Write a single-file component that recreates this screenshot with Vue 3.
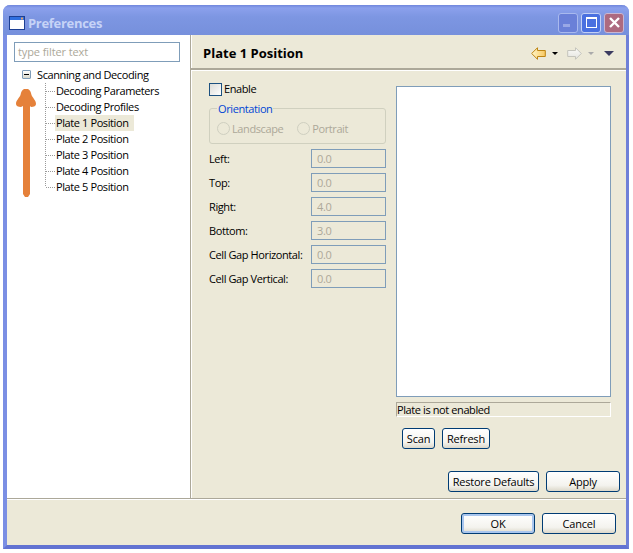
<template>
  <div class="window">
    <div class="titlebar">
      <svg class="app-icon" width="16" height="14" viewBox="0 0 16 14">
        <rect x="0.5" y="0.5" width="15" height="13" fill="#fff" stroke="#1c3f94" />
        <rect x="1" y="1" width="14" height="3" fill="#2f6fe0" />
        <rect x="12" y="1.5" width="2" height="2" fill="#e8a060" />
      </svg>
      <span class="title">Preferences</span>
      <div class="caption-buttons">
        <button class="cap cap-min"><span class="min-bar"></span></button>
        <button class="cap cap-max"><span class="max-box"></span></button>
        <button class="cap cap-close">
          <svg width="13" height="13" viewBox="0 0 13 13">
            <path d="M2 2 L11 11 M11 2 L2 11" stroke="#fff" stroke-width="2.4" />
          </svg>
        </button>
      </div>
    </div>

    <div class="body">
      <aside class="sidebar">
        <div class="filter">type filter text</div>
        <div class="tree">
          <div class="tree-root">
            <span class="expander"></span>
            <span>Scanning and Decoding</span>
          </div>
          <div class="tree-children">
            <div v-for="item in treeItems" :key="item" class="tree-row">
              <span class="dots"></span>
              <span class="tree-label" :class="{ selected: item === 'Plate 1 Position' }">{{ item }}</span>
            </div>
          </div>
        </div>
        <svg class="arrow" width="20" height="109" viewBox="0 0 20 109">
          <path d="M8 0 L12 0 C14 1 15 3 15.5 6 C16.5 9 20 11 20 15 C20 17 18 18 15 18 L14 17 L14 105 L12 108 L9 108 L7 105 L7 17 L5 18 C2 18 0 17 0 15 C0 11 3.5 9 4.5 6 C5 3 6 1 8 0 Z" fill="#e5813a" />
        </svg>
      </aside>

      <main class="page">
        <header class="page-header">
          <h1>Plate 1 Position</h1>
          <div class="nav-tools">
            <svg width="15" height="13" viewBox="0 0 15 13">
              <defs>
                <linearGradient id="backFill" x1="0" y1="0" x2="1" y2="0">
                  <stop offset="0" stop-color="#fff6c8" />
                  <stop offset="1" stop-color="#f8c860" />
                </linearGradient>
              </defs>
              <path d="M0.7 6.5 L6.5 0.7 L6.5 3.5 L14.3 3.5 L14.3 9.5 L6.5 9.5 L6.5 12.3 Z" fill="url(#backFill)" stroke="#bd8412" />
            </svg>
            <span class="tri black"></span>
            <svg width="15" height="13" viewBox="0 0 15 13">
              <defs>
                <linearGradient id="fwdFill" x1="0" y1="0" x2="0" y2="1">
                  <stop offset="0" stop-color="#fbfbf9" />
                  <stop offset="1" stop-color="#e4e4de" />
                </linearGradient>
              </defs>
              <path d="M14.3 6.5 L8.5 0.7 L8.5 3.5 L0.7 3.5 L0.7 9.5 L8.5 9.5 L8.5 12.3 Z" fill="url(#fwdFill)" stroke="#c4c4bc" />
            </svg>
            <span class="tri grey"></span>
            <span class="tri menu"></span>
          </div>
        </header>

        <div class="page-content">
          <div class="columns">
            <section class="form">
              <label class="check-row"><span class="check"></span>Enable</label>
              <fieldset class="orientation">
                <legend>Orientation</legend>
                <span class="radio-item"><span class="radio"></span>Landscape</span>
                <span class="radio-item"><span class="radio"></span>Portrait</span>
              </fieldset>
              <div class="fields">
                <template v-for="f in fields" :key="f.label">
                  <span class="field-label">{{ f.label }}</span>
                  <span class="field-input">{{ f.value }}</span>
                </template>
              </div>
            </section>

            <section class="preview-col">
              <div class="preview"></div>
              <div class="status">Plate is not enabled</div>
              <div class="scan-buttons">
                <button class="btn scan">Scan</button>
                <button class="btn refresh">Refresh</button>
              </div>
            </section>
          </div>

          <div class="page-actions">
            <button class="btn restore">Restore Defaults</button>
            <button class="btn apply">Apply</button>
          </div>
        </div>
      </main>
    </div>

    <footer class="footer">
      <button class="btn wide ok">OK</button>
      <button class="btn wide">Cancel</button>
    </footer>
  </div>
</template>

<script setup>
const treeItems = [
  'Decoding Parameters',
  'Decoding Profiles',
  'Plate 1 Position',
  'Plate 2 Position',
  'Plate 3 Position',
  'Plate 4 Position',
  'Plate 5 Position',
]

const fields = [
  { label: 'Left:', value: '0.0' },
  { label: 'Top:', value: '0.0' },
  { label: 'Right:', value: '4.0' },
  { label: 'Bottom:', value: '3.0' },
  { label: 'Cell Gap Horizontal:', value: '0.0' },
  { label: 'Cell Gap Vertical:', value: '0.0' },
]
</script>

<style>
html, body {
  margin: 0;
  background: #fff;
}
</style>

<style scoped>
.window {
  box-sizing: border-box;
  width: 626px;
  height: 544px;
  margin: 5px 0 0 3px;
  display: flex;
  flex-direction: column;
  border: 4px solid #7b8fe4;
  border-top: 0;
  border-right-width: 3px;
  border-right-color: #6f80d8;
  border-bottom-color: #6273d2;
  border-radius: 7px 7px 0 0;
  background: #ece9d8;
  font-family: "Open Sans", "Liberation Sans", sans-serif;
  font-size: 11px;
  letter-spacing: -0.4px;
  color: #000;
}

.titlebar {
  box-sizing: border-box;
  height: 30px;
  flex: none;
  margin: 0 -3px 0 -4px;
  padding: 5px 5px 0 6px;
  display: flex;
  align-items: center;
  background: linear-gradient(#6f86dc, #8ba0ec 3px, #7d96e2 12px, #7690dc);
  border-radius: 7px 7px 0 0;
}

.app-icon {
  flex: none;
}

.title {
  margin-left: 3px;
  font-size: 13px;
  font-weight: bold;
  letter-spacing: -0.3px;
  color: #c6d3f7;
}

.caption-buttons {
  margin-left: auto;
  display: flex;
  gap: 3px;
}

.cap {
  box-sizing: border-box;
  width: 20px;
  height: 20px;
  padding: 0;
  display: flex;
  align-items: center;
  justify-content: center;
  border: 1px solid #a9b9ee;
  border-radius: 3px;
}

.cap-min {
  background: #6a80d8;
  justify-content: flex-start;
}

.min-bar {
  width: 7px;
  height: 3px;
  margin: 6px 0 0 4px;
  background: #99a8e6;
}

.cap-max {
  background: #4a70e0;
  border-color: #c3d0f5;
}

.max-box {
  box-sizing: border-box;
  width: 11px;
  height: 11px;
  border: 1px solid #fff;
  border-top-width: 2px;
}

.cap-close {
  background: #ad6a80;
  border-color: #c9b6d2;
}

.body {
  flex: 1;
  min-height: 0;
  display: flex;
  border-bottom: 1px solid #aca899;
}

.sidebar {
  position: relative;
  box-sizing: border-box;
  width: 183px;
  flex: none;
  padding: 7px 0 0 7px;
  background: #fff;
}

.filter {
  box-sizing: border-box;
  width: 166px;
  height: 20px;
  padding-left: 3px;
  line-height: 18px;
  border: 1px solid #7f9db9;
  color: #aca899;
  letter-spacing: -0.1px;
}

.tree {
  margin-top: 4px;
  padding-left: 8px;
}

.tree-root {
  height: 17px;
  display: flex;
  align-items: center;
  gap: 6px;
}

.expander {
  position: relative;
  box-sizing: border-box;
  width: 9px;
  height: 9px;
  border: 1px solid #7f9db9;
  border-radius: 1px;
  background: linear-gradient(#fff, #d8d8cc);
}

.expander::after {
  content: "";
  position: absolute;
  left: 1px;
  top: 3px;
  width: 5px;
  height: 1px;
  background: #000;
}

.tree-children {
  margin-left: 23px;
  height: 103px;
  background: linear-gradient(to bottom, #9a9a9a 50%, transparent 50%) 0 0 / 1px 2px repeat-y;
}

.tree-row {
  height: 16px;
  display: flex;
  align-items: center;
}

.dots {
  width: 9px;
  height: 1px;
  margin-left: 1px;
  background: repeating-linear-gradient(to right, #9a9a9a 0 1px, transparent 1px 2px);
}

.tree-label {
  padding: 0 5px 0 1px;
  line-height: 16px;
}

.tree-label.selected {
  background: #ece9d8;
}

.arrow {
  position: absolute;
  left: 9px;
  top: 54px;
}

.page {
  flex: 1;
  min-width: 0;
  display: flex;
  flex-direction: column;
  border-left: 1px solid #aca899;
  box-shadow: inset 1px 0 0 #fff;
}

.page-header {
  box-sizing: border-box;
  height: 35px;
  flex: none;
  padding: 3px 12px 0 12px;
  display: flex;
  align-items: center;
  justify-content: space-between;
  border-bottom: 2px solid #aca899;
  box-shadow: 0 1px 0 #fff;
}

.page-header h1 {
  margin: 0;
  font-size: 13px;
  font-weight: bold;
  letter-spacing: 0;
}

.nav-tools {
  display: flex;
  align-items: center;
}

.tri {
  width: 0;
  height: 0;
  border-style: solid;
  border-color: transparent;
  border-width: 3px 3px 0;
}

.tri.black {
  margin: 0 9px 0 6px;
  border-top-color: #000;
}

.tri.grey {
  margin: 0 10px 0 6px;
  border-top-color: #aaa;
}

.tri.menu {
  border-width: 5px 5px 0;
  border-top-color: #3b3b60;
}

.page-content {
  flex: 1;
  min-height: 0;
  display: flex;
  flex-direction: column;
  padding: 12px 6px 6px 18px;
}

.columns {
  flex: 1;
  min-height: 0;
  display: flex;
}

.form {
  width: 177px;
  flex: none;
}

.check-row {
  height: 14px;
  display: flex;
  align-items: center;
  gap: 2px;
  line-height: 14px;
}

.check {
  box-sizing: border-box;
  width: 13px;
  height: 13px;
  border: 1px solid #1c5180;
  background: linear-gradient(135deg, #dcdcd7, #fff);
}

.orientation {
  box-sizing: border-box;
  width: 177px;
  height: 43px;
  margin: 5px 0 0;
  padding: 0 0 0 7px;
  display: flex;
  align-items: center;
  gap: 14px;
  border: 1px solid #d0d0bf;
  border-radius: 3px;
  color: #aca899;
}

.orientation legend {
  padding: 0 1px;
  margin-left: 0;
  color: #0046d5;
}

.radio-item {
  display: flex;
  align-items: center;
  gap: 2px;
  margin-top: -3px;
}

.radio {
  box-sizing: border-box;
  width: 13px;
  height: 13px;
  border: 1px solid #cfcfc0;
  border-radius: 50%;
}

.fields {
  margin-top: 5px;
  display: grid;
  grid-template-columns: 102px 75px;
  row-gap: 5px;
  align-items: center;
}

.field-input {
  box-sizing: border-box;
  height: 19px;
  padding-left: 5px;
  line-height: 17px;
  border: 1px solid #7f9db9;
  color: #aca899;
}

.preview-col {
  width: 215px;
  margin-left: 10px;
  margin-top: 4px;
  display: flex;
  flex-direction: column;
  align-items: flex-start;
}

.preview {
  box-sizing: border-box;
  width: 215px;
  height: 311px;
  background: #fff;
  border: 1px solid #7f9db9;
}

.status {
  box-sizing: border-box;
  width: 215px;
  height: 15px;
  margin-top: 5px;
  line-height: 13px;
  border: 1px solid;
  border-color: #aca899 #fff #fff #aca899;
}

.scan-buttons {
  margin: 11px 0 0 6px;
  display: flex;
  gap: 7px;
}

.btn {
  box-sizing: border-box;
  height: 21px;
  padding: 0;
  font: inherit;
  letter-spacing: -0.2px;
  color: #000;
  border: 1px solid #003c74;
  border-radius: 3px;
  background: linear-gradient(#fff, #f4f3ee 70%, #dcd8ca);
}

.scan {
  width: 33px;
}

.refresh {
  width: 48px;
}

.page-actions {
  flex: none;
  display: flex;
  justify-content: flex-end;
  gap: 7px;
}

.restore {
  width: 91px;
}

.apply {
  width: 74px;
}

.footer {
  box-sizing: border-box;
  height: 46px;
  flex: none;
  padding: 13px 10px 0 0;
  display: flex;
  justify-content: flex-end;
  gap: 7px;
  border-top: 1px solid #fff;
}

.wide {
  width: 74px;
}

.ok {
  box-shadow: inset 0 0 0 2px #a9c6ee;
}
</style>
